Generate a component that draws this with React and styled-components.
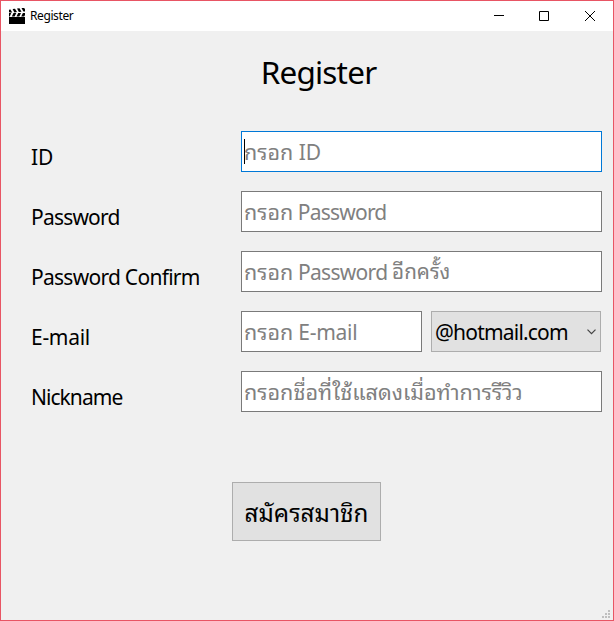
import React from "react";
import styled, { createGlobalStyle } from "styled-components";

const GlobalStyle = createGlobalStyle`
  * { box-sizing: border-box; }
  html, body, #root { margin: 0; height: 100%; }
  body { overflow: hidden; background: #f0f0f0; }
`;

const Window = styled.div`
  display: flex;
  flex-direction: column;
  position: relative;
  width: 614px;
  height: 621px;
  border: 1px solid #e85564;
  background: #f0f0f0;
  color: #000;
  font-family: "Noto Sans", "Noto Sans Thai Looped", "Noto Sans Thai", sans-serif;
`;

const TitleBar = styled.header`
  display: flex;
  align-items: center;
  height: 30px;
  padding-left: 8px;
  background: #fff;
`;

const Caption = styled.span`
  flex: 1;
  margin-left: 5px;
  font-size: 12px;
  line-height: 30px;
  letter-spacing: -0.4px;
`;

const WindowButton = styled.div`
  display: flex;
  width: 45px;
  height: 30px;
  align-items: center;
  padding-left: ${(p) => p.$inset || 16}px;
`;

const Heading = styled.h1`
  margin: 19px 0 0;
  padding-left: 23px;
  height: 44px;
  text-align: center;
  font-size: 31.5px;
  font-weight: 400;
  line-height: 44px;
  letter-spacing: -0.8px;
`;

const Form = styled.form`
  display: grid;
  grid-template-columns: 210px 361px;
  grid-auto-rows: 41px;
  row-gap: 19px;
  margin: 37px 0 0 30px;
`;

const Label = styled.label`
  padding-top: 6px;
  font-size: 21px;
  line-height: 41px;
  white-space: nowrap;
  letter-spacing: ${(p) => p.$spacing ?? -0.8}px;
`;

const Controls = styled.div`
  display: flex;
  gap: 9px;
`;

const Field = styled.div`
  display: flex;
  align-items: center;
  width: ${(p) => p.$width || 361}px;
  height: 41px;
  padding-left: 2px;
  border: 1px solid ${(p) => (p.$focused ? "#0078d7" : "#7a7a7a")};
  background: #fff;
  color: #808080;
  font-size: 21px;
  line-height: 41px;
  white-space: pre;
`;

const Caret = styled.i`
  width: 1px;
  height: 25px;
  margin-right: -1px;
  background: #000;
`;

const Run = styled.span`
  letter-spacing: ${(p) => p.$spacing ?? -0.8}px;
`;

const Latin = styled(Run)`
  padding-top: 2px;
`;

const Thai = styled.span`
  font-size: ${(p) => p.$size || 21.5}px;
`;

const Combo = styled.div`
  display: flex;
  align-items: center;
  justify-content: space-between;
  width: 170px;
  height: 41px;
  padding: 0 4px 0 3px;
  border: 1px solid #adadad;
  background: #e1e1e1;
  font-size: 21px;
  line-height: 39px;
`;

const Submit = styled.button`
  width: 149px;
  height: 59px;
  margin: 70px 0 0 231px;
  padding: 0;
  border: 1px solid #adadad;
  border-radius: 0;
  background: #e1e1e1;
  color: #000;
  font-family: inherit;
  font-size: 24.2px;
  line-height: 59px;
  white-space: nowrap;
`;

const Grip = styled.svg`
  position: absolute;
  right: 3px;
  bottom: 2px;
`;

function Clapper() {
  return (
    <svg width="16" height="16" viewBox="0 0 16 16">
      <path d="M0 9h16v7H0zM0 5h2.2L.8 8.5H0zM4.5 5h2.8L5.6 8.5H2.8zM9.2 5H12l-1.7 3.5H7.5zM13.9 5H16v2l-.8 1.5h-3z" />
      <path d="M0 1.7l1.5-.3L3.2 4.5H.5L0 4zM3.6 1.1L6 .7l2 3.4-2.6.3zM8 .5l2.5-.2 2 3.4-2.6.3zM12.5.1L15.2 0l.8 1.2v2.2l-1.6.2z" />
    </svg>
  );
}

export default function App() {
  return (
    <>
      <GlobalStyle />
      <Window>
        <TitleBar>
          <Clapper />
          <Caption>Register</Caption>
          <WindowButton>
            <svg width="10" height="10"><path d="M0 4h10v1H0z" /></svg>
          </WindowButton>
          <WindowButton>
            <svg width="10" height="10"><path d="M.5.5h9v9h-9z" fill="none" stroke="#000" /></svg>
          </WindowButton>
          <WindowButton $inset={17}>
            <svg width="10" height="10"><path d="M0 0l10 10M10 0L0 10" stroke="#000" /></svg>
          </WindowButton>
        </TitleBar>
        <Heading>Register</Heading>
        <Form>
          <Label $spacing={-0.2}>ID</Label>
          <Field $focused><Caret /><Thai>กรอก</Thai><Latin $spacing={0}> ID</Latin></Field>
          <Label>Password</Label>
          <Field><Thai>กรอก</Thai><Latin> Password</Latin></Field>
          <Label $spacing={-0.73}>Password Confirm</Label>
          <Field><Thai>กรอก</Thai><Latin $spacing={-0.7}> Password </Latin><Thai $size={20.6}>อีกครั้ง</Thai></Field>
          <Label $spacing={-0.3}>E-mail</Label>
          <Controls>
            <Field $width={181}><Thai>กรอก</Thai><Latin $spacing={-0.3}> E-mail</Latin></Field>
            <Combo>
              <Latin>@hotmail.com</Latin>
              <svg width="9" height="6"><path d="M.5.7l4 4 4-4" fill="none" stroke="#444" strokeWidth="1.2" /></svg>
            </Combo>
          </Controls>
          <Label $spacing={-0.95}>Nickname</Label>
          <Field><Thai $size={21.6}>กรอกชื่อที่ใช้แสดงเมื่อทำการรีวิว</Thai></Field>
        </Form>
        <Submit type="button">สมัครสมาชิก</Submit>
        <Grip width="8" height="8" fill="#bfbfbf">
          <path d="M6 0h2v2H6zM3 3h2v2H3zM6 3h2v2H6zM0 6h2v2H0zM3 6h2v2H3zM6 6h2v2H6z" />
        </Grip>
      </Window>
    </>
  );
}
